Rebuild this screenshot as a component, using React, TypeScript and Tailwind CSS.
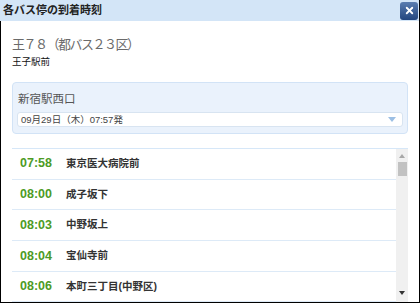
import { X } from 'lucide-react';

const stops = [
  { time: '07:58', name: '東京医大病院前' },
  { time: '08:00', name: '成子坂下' },
  { time: '08:03', name: '中野坂上' },
  { time: '08:04', name: '宝仙寺前' },
  { time: '08:06', name: '本町三丁目(中野区)' },
];

const jp = { fontFamily: '"Liberation Sans", "Noto Sans CJK JP", sans-serif' };

export default function App() {
  return (
    <div className="w-[420px] h-[303px] flex flex-col bg-white overflow-hidden" style={jp}>
      {/* Title bar */}
      <div className="h-[21px] flex items-center justify-between bg-[#d3e5f7] border-r border-black pl-[3px] pr-[1px]">
        <span className="text-[11px] font-bold text-[#222] leading-none">各バス停の到着時刻</span>
        <button className="w-[18px] h-[18px] rounded-[3px] bg-gradient-to-b from-[#5a7db0] to-[#23467f] flex items-center justify-center">
          <X className="w-[11px] h-[11px] text-white" strokeWidth={4} />
        </button>
      </div>

      {/* Body */}
      <div className="flex-1 flex flex-col border-x border-b border-black px-[11px] min-h-0">
        <div className="pt-[15px]">
          <div className="text-[13px] leading-[17px] text-[#6a6a6a] tracking-[-1.5px]">王７８（都バス２３区）</div>
          <div className="text-[9.5px] leading-[13px] text-[#111] mt-[2px]">王子駅前</div>
        </div>

        {/* Departure stop */}
        <div className="mt-[14px] h-[52px] rounded-[4px] border border-[#d2e3f6] bg-[#eaf2fc] px-[4px] pt-[8px]">
          <div className="text-[11.5px] leading-[16px] text-[#555] pl-[1px]">新宿駅西口</div>
          <div className="mt-[5px] h-[15px] rounded-[3px] border border-[#d8e4f1] bg-white flex items-center justify-between pl-[3px] pr-[6px]">
            <span className="text-[9.5px] leading-none text-[#444]">09月29日（木）07:57発</span>
            <svg width="8" height="5" viewBox="0 0 8 5">
              <path d="M0 0 H8 L4 5 Z" fill="#9cbfe4" />
            </svg>
          </div>
        </div>

        {/* Arrival list */}
        <div className="mt-[14px] flex-1 min-h-0 flex border-t border-[#d6e7f8]">
          <div className="flex-1 flex flex-col">
            {stops.map((s) => (
              <div key={s.time} className="h-[30.7px] shrink-0 flex items-center border-b border-[#ddeaf7] pl-[8px]">
                <span className="w-[46px] text-[12.5px] font-bold text-[#4d9b25]">{s.time}</span>
                <span className="text-[10.5px] font-bold text-[#333]">{s.name}</span>
              </div>
            ))}
          </div>
          <div className="w-[12px] bg-[#f0f0f0] flex flex-col items-center relative">
            <svg className="mt-[5px]" width="6" height="4" viewBox="0 0 6 4">
              <path d="M0 4 L3 0 L6 4 Z" fill="#a8a8a8" />
            </svg>
            <div className="mt-[4px] w-[9px] h-[14px] bg-[#c2c2c2]" />
            <svg className="absolute bottom-[7px]" width="6" height="4" viewBox="0 0 6 4">
              <path d="M0 0 H6 L3 4 Z" fill="#333" />
            </svg>
          </div>
        </div>
      </div>
    </div>
  );
}
